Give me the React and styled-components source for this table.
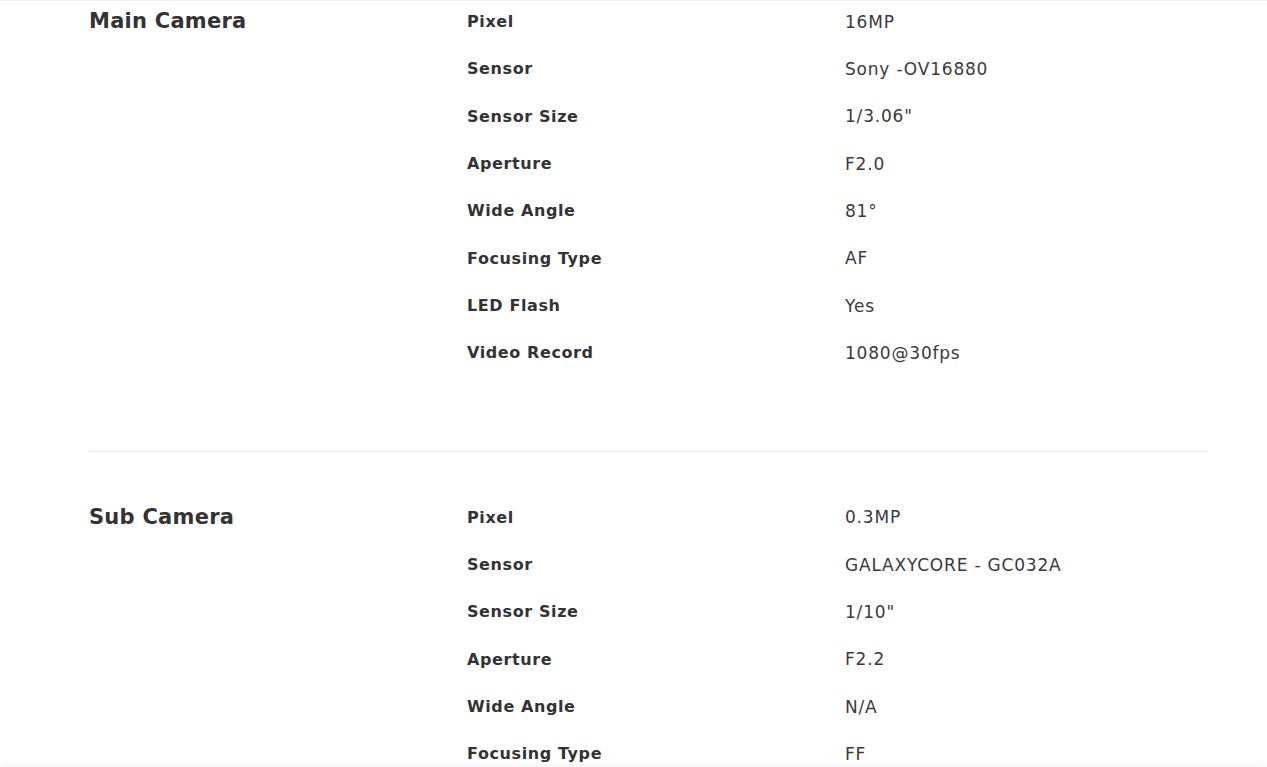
import React from 'react';
import styled, { createGlobalStyle } from 'styled-components';

const specs = [
  {
    title: 'Main Camera',
    rows: [
      ['Pixel', '16MP'],
      ['Sensor', 'Sony -OV16880'],
      ['Sensor Size', '1/3.06"'],
      ['Aperture', 'F2.0'],
      ['Wide Angle', '81°'],
      ['Focusing Type', 'AF'],
      ['LED Flash', 'Yes'],
      ['Video Record', '1080@30fps'],
    ],
  },
  {
    title: 'Sub Camera',
    rows: [
      ['Pixel', '0.3MP'],
      ['Sensor', 'GALAXYCORE - GC032A'],
      ['Sensor Size', '1/10"'],
      ['Aperture', 'F2.2'],
      ['Wide Angle', 'N/A'],
      ['Focusing Type', 'FF'],
    ],
  },
];

export default function App() {
  return (
    <>
      <GlobalStyle />
      <Page>
        <Container>
          {specs.map((section, i) => (
            <Section key={section.title} $first={i === 0}>
              <SectionTitle>{section.title}</SectionTitle>
              <SpecList>
                {section.rows.map(([label, value]) => (
                  <SpecRow key={label}>
                    <Label>{label}</Label>
                    <Value>{value}</Value>
                  </SpecRow>
                ))}
              </SpecList>
            </Section>
          ))}
        </Container>
      </Page>
      <BottomShade />
    </>
  );
}

const GlobalStyle = createGlobalStyle`
  html, body {
    margin: 0;
    padding: 0;
    background: #fff;
    overflow: hidden;
  }
  body {
    font-family: "DejaVu Sans", "Noto Sans", sans-serif;
    color: #333;
  }
`;

const Page = styled.div`
  height: 767px;
  overflow: hidden;
  border-top: 1px solid #f0f0f0;
`;

const Container = styled.div`
  margin: -3px 59px 0 89px;
`;

const Section = styled.section`
  display: grid;
  grid-template-columns: 378px 1fr;
  padding: ${(p) => (p.$first ? '0 0 74px' : '42px 0 0')};
  border-bottom: ${(p) => (p.$first ? '1px solid #e5e5e5' : 'none')};
`;

const SectionTitle = styled.h2`
  margin: 0;
  font-size: 21px;
  font-weight: 600;
  letter-spacing: 0.25px;
  line-height: 47.33px;
  color: #333;
`;

const SpecList = styled.div`
  display: flex;
  flex-direction: column;
`;

const SpecRow = styled.div`
  display: grid;
  grid-template-columns: 378px 1fr;
  height: 47.33px;
  align-items: center;
`;

const Label = styled.span`
  font-size: 16px;
  font-weight: 600;
  letter-spacing: 0.6px;
  color: #333;
`;

const Value = styled.span`
  font-size: 17px;
  font-weight: 400;
  letter-spacing: 0.8px;
  color: #3a3a3a;
`;

const BottomShade = styled.div`
  position: fixed;
  left: 0;
  right: 0;
  top: 767px;
  height: 10px;
  box-shadow: 0 -3px 8px rgba(0, 0, 0, 0.05);
`;
